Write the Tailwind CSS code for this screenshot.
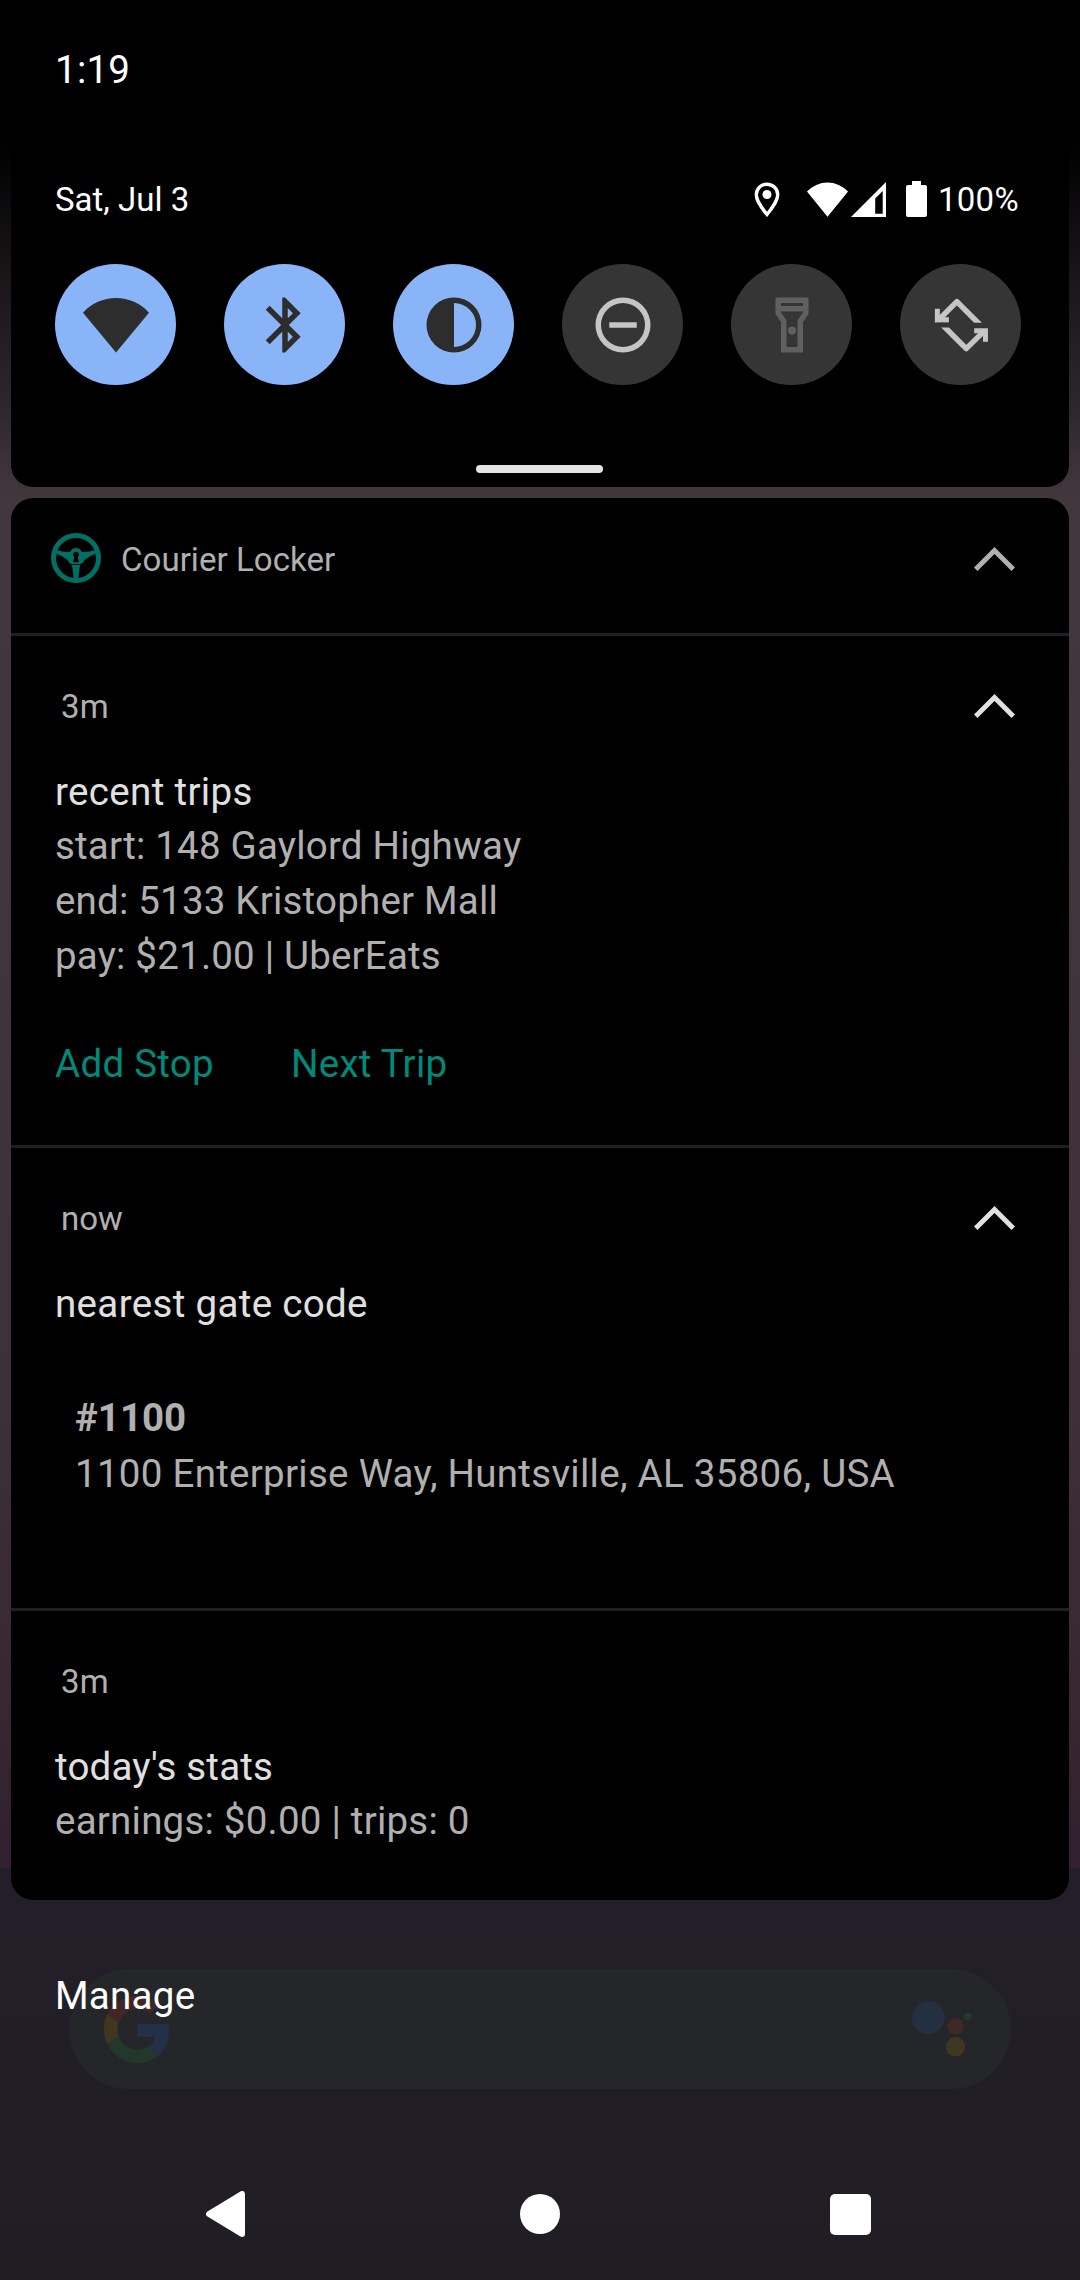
<!DOCTYPE html>
<html lang="en">
<head>
<meta charset="utf-8">
<title>Notification shade</title>
<script src="https://cdn.jsdelivr.net/npm/@tailwindcss/browser@4"></script>
</head>
<body class="relative h-[2280px] w-[1080px] overflow-hidden bg-black font-[Roboto,sans-serif] text-[38.5px] leading-[45px] text-white">

  <!-- Dimmed home screen -->
  <div class="absolute inset-0">
    <div class="h-[1868px] bg-[linear-gradient(to_bottom,#000_140px,#0f0d0f_220px,#1b171a_290px,#2b262a_400px,#3b3136_460px,#42373c_498px,#40353b_900px,#3d3037_1400px,#38272f_1700px,#302030_1868px)]"></div>
    <div class="h-[412px] bg-[linear-gradient(to_bottom,#231f2a_0px,#221e27_200px,#201d23_412px)]"></div>
    <div class="absolute top-[1969px] left-[69px] flex h-[120px] w-[942px] items-center justify-between rounded-full bg-[#242629] pr-[38px] pl-[35px]">
      <svg class="h-[67px] w-[65px]" viewBox="0 0 46 47" preserveAspectRatio="none">
        <path fill="#24304a" d="M23.500 19.600v8.900h12.700c-.6 2.900-2.300 5.400-4.700 7l7.600 5.900C43.500 37.300 46 31.200 46 24c0-1.500-.1-3-.4-4.400z"/>
        <path fill="#23382d" d="M2.500 33.600C6.300 41.400 14.300 47 23.500 47c6.300 0 11.600-2.100 15.600-5.600l-7.600-5.900c-2.100 1.400-4.800 2.300-8 2.300-6.100 0-11.300-4.100-13.200-9.700z"/>
        <path fill="#41361f" d="M10.300 28.100c-.5-1.500-.8-3-.8-4.600s.3-3.200.8-4.600l-7.800-6.100C.9 16 0 19.600 0 23.500s.9 7.300 2.500 10.100z"/>
        <path fill="#412628" d="M23.500 9.300c3.500 0 6.500 1.200 8.900 3.500l6.700-6.700C35 2.300 29.700 0 23.500 0 14.300 0 6.300 5.300 2.500 12.900l7.800 6.100c1.900-5.600 7.100-9.700 13.200-9.700z"/>
      </svg>
      <svg class="h-[60px] w-[62px]" viewBox="911 1999 62 60">
        <circle cx="928.400" cy="2017.800" r="16.500" fill="#242f40"/>
        <circle cx="955.700" cy="2026.300" r="8.300" fill="#402728"/>
        <circle cx="967.900" cy="2016.500" r="4.100" fill="#22382d"/>
        <circle cx="955.500" cy="2046.800" r="9.700" fill="#403722"/>
      </svg>
    </div>
  </div>

  <div class="relative flex h-full flex-col">
    <div class="h-[140px] pt-[47px] pl-[55px] tracking-[0.25px]">1:19</div>

    <!-- Quick settings -->
    <section class="mx-[11px] h-[347px] rounded-[22px] bg-black px-[44px] pt-[40px]">
      <div class="flex h-[39px] items-center text-[33px] leading-[39px]">
        <span class="w-[699px]">Sat, Jul 3</span>
        <svg class="h-[35px] w-[26px]" viewBox="0 0 26 35"><path d="M13 2.200C7 2.200 2.300 6.900 2.300 12.800c0 7 10.700 19.700 10.700 19.700s10.700-12.700 10.700-19.700C23.700 6.900 19 2.200 13 2.200z" fill="none" stroke="#fff" stroke-width="3.400"/><circle cx="13" cy="12.500" r="4.500" fill="#fff"/></svg>
        <svg class="ml-[27px] h-[35px] w-[41px]" viewBox="0 0 41 35"><path d="M0 9.500A28 28 0 0 1 41 9.500L20.500 34.700z" fill="#fff"/></svg>
        <svg class="ml-[3px] h-[36px] w-[35px]" viewBox="0 0 35 36"><path fill="#fff" fill-rule="evenodd" d="M0 35L35 0v35zM24.200 31.700H31.700V9L24.200 16.500z"/></svg>
        <svg class="ml-[20px] h-[37px] w-[21px]" viewBox="0 0 21 37"><path fill="#fff" d="M6 0h9v4h4a2 2 0 0 1 2 2v28a2 2 0 0 1-2 2H2a2 2 0 0 1-2-2V6a2 2 0 0 1 2-2h4z"/></svg>
        <span class="ml-[11px] tracking-[0.25px]">100%</span>
      </div>
      <div class="mt-[45px] flex gap-[48px]">
        <div class="flex size-[121px] items-center justify-center rounded-full bg-[#8ab4f8]">
          <svg class="size-[66px]" viewBox="0 0 24 24" fill="#2d2d2d"><path d="M0 7.500A16.200 16.200 0 0 1 24 7.500L12 22z"/></svg>
        </div>
        <div class="flex size-[121px] items-center justify-center rounded-full bg-[#8ab4f8]">
          <svg class="size-[66px]" viewBox="0 0 24 24" fill="#2d2d2d"><path d="M17.710 7.710L12 2h-1v7.590L6.410 5 5 6.410 10.590 12 5 17.590 6.410 19 11 14.410V22h1l5.710-5.710L13.410 12l4.300-4.290zM13 5.830l1.880 1.880L13 9.590V5.830zm1.880 10.460L13 18.170v-3.760l1.880 1.880z"/></svg>
        </div>
        <div class="flex size-[121px] items-center justify-center rounded-full bg-[#8ab4f8]">
          <svg class="size-[66px]" viewBox="0 0 24 24" fill="#2d2d2d"><path d="M12 2a10 10 0 1 0 0 20 10 10 0 0 0 0-20zm0 18V4a8 8 0 0 1 0 16z"/></svg>
        </div>
        <div class="flex size-[121px] items-center justify-center rounded-full bg-[#353535]">
          <svg class="size-[66px]" viewBox="0 0 24 24" fill="#c5c5c5"><path fill-rule="evenodd" d="M12 2a10 10 0 1 0 0 20 10 10 0 0 0 0-20zm0 18a8 8 0 1 1 0-16 8 8 0 0 1 0 16zM7 11h10v2H7z"/></svg>
        </div>
        <div class="flex size-[121px] items-center justify-center rounded-full bg-[#353535]">
          <svg class="size-[66px]" viewBox="0 0 24 24" fill="#606060"><path fill-rule="evenodd" d="M6 2v6l2 3v11h8V11l2-3V2zm10 2v1.100H8V4zm-2 6.400V20h-4v-9.600L8 7.400V7.100h8v.3z"/><circle cx="12" cy="14" r="1.500"/></svg>
        </div>
        <div class="flex size-[121px] items-center justify-center rounded-full bg-[#353535]">
          <svg class="size-[66px]" viewBox="0 0 24 24" fill="none"><path stroke="#c5c5c5" stroke-width="2" stroke-linejoin="round" d="M4.300 9.700L10.500 3.500L18.900 11.900M5.400 12.100L13.900 20.600L20.100 14.500"/><path fill="#c5c5c5" d="M2.500 6.100h1.800v3.100h3.300v1.900H2.500zM21.800 18.100H20v-3.100h-3.200v-1.800h5z"/><path fill="#353535" d="M15 11.150h6v1.850h-6zM3 11.150h6v1.750H3z"/></svg>
        </div>
      </div>
      <div class="mt-[80px] ml-[421px] h-[8px] w-[127px] rounded-full bg-[#e4e4e4]"></div>
    </section>

    <!-- Courier Locker notification group -->
    <section class="mx-[11px] mt-[11px] h-[1402px] rounded-[22px] bg-black text-[#b0b0b0]">
      <div class="flex h-[138px] items-start border-b-[3px] border-[#1f2022] pr-[54px] pl-[40px] text-[33px] leading-[39px]">
        <svg class="mt-[35px] size-[50px]" viewBox="21 27 150 150" fill="#007064">
          <circle cx="96" cy="102" r="67.500" fill="none" stroke="#007064" stroke-width="15"/>
          <path d="M34 77Q58 85 79 84A18 18 0 0 1 113 84Q134 85 158 77L160 87Q140 94 122 107Q118 117 109 120H83Q74 117 70 107Q52 94 32 87z"/>
          <path d="M84 123H108L102 168H90z"/>
          <path d="M96 83a9 9 0 0 1 5 16.500l4 15H87l4-15a9 9 0 0 1 5-16.500z" fill="#000"/>
        </svg>
        <span class="mt-[42px] ml-[20px] grow tracking-[0.05px]">Courier Locker</span>
        <svg class="mt-[49px] h-[24px] w-[41px]" viewBox="0 0 41 24"><path fill="#b0b0b0" d="M0 20.500L20.500 0 41 20.500 37.500 24 20.500 7 3.500 24z"/></svg>
      </div>

      <article class="h-[512px] border-b-[3px] border-[#1f1f1f] pt-[51px] pr-[54px] pl-[44px]">
        <div class="flex items-start justify-between pl-[6px]">
          <span class="text-[33px] leading-[39px] tracking-[0.2px]">3m</span>
          <svg class="mt-[7px] h-[24px] w-[41px]" viewBox="0 0 41 24"><path fill="#e0e0e0" d="M0 20.500L20.500 0 41 20.500 37.500 24 20.500 7 3.500 24z"/></svg>
        </div>
        <h2 class="mt-[43px] tracking-[0.34px] text-[#e0e0e0]">recent trips</h2>
        <div class="mt-[4px] leading-[55px] tracking-[0.2px]">
          <p>start: 148 Gaylord Highway</p>
          <p>end: 5133 Kristopher Mall</p>
          <p>pay: $21.00 | UberEats</p>
        </div>
        <div class="mt-[58px] flex gap-[77px] tracking-[0.28px] text-[#00897b]">
          <span>Add Stop</span>
          <span>Next Trip</span>
        </div>
      </article>

      <article class="h-[463px] border-b-[3px] border-[#1f1f1f] pt-[51px] pr-[54px] pl-[44px]">
        <div class="flex items-start justify-between pl-[6px]">
          <span class="text-[33px] leading-[39px]">now</span>
          <svg class="mt-[7px] h-[24px] w-[41px]" viewBox="0 0 41 24"><path fill="#e0e0e0" d="M0 20.500L20.500 0 41 20.500 37.500 24 20.500 7 3.500 24z"/></svg>
        </div>
        <h2 class="mt-[43px] tracking-[0.34px] text-[#e0e0e0]">nearest gate code</h2>
        <p class="mt-[69px] pl-[20px] font-bold">#1100</p>
        <p class="mt-[11px] pl-[20px] tracking-[0.28px]">1100 Enterprise Way, Huntsville, AL 35806, USA</p>
      </article>

      <article class="pt-[51px] pl-[44px]">
        <p class="pl-[6px] text-[33px] leading-[39px] tracking-[0.2px]">3m</p>
        <h2 class="mt-[43px] tracking-[0.2px] text-[#e0e0e0]">today's stats</h2>
        <p class="mt-[9px] tracking-[0.22px]">earnings: $0.00 | trips: 0</p>
      </article>
    </section>

    <div class="mt-[73px] pl-[55px] tracking-[0.25px]">Manage</div>

    <!-- Navigation bar -->
    <nav class="mt-auto flex h-[132px] items-center pl-[206px]">
      <svg class="h-[46px] w-[40px]" viewBox="0 0 40 46"><path d="M3 23L36 3V43z" fill="#fff" stroke="#fff" stroke-width="6" stroke-linejoin="round"/></svg>
      <div class="ml-[274px] size-[40px] rounded-full bg-white"></div>
      <div class="ml-[270px] size-[41px] rounded-[5px] bg-white"></div>
    </nav>
  </div>
</body>
</html>
